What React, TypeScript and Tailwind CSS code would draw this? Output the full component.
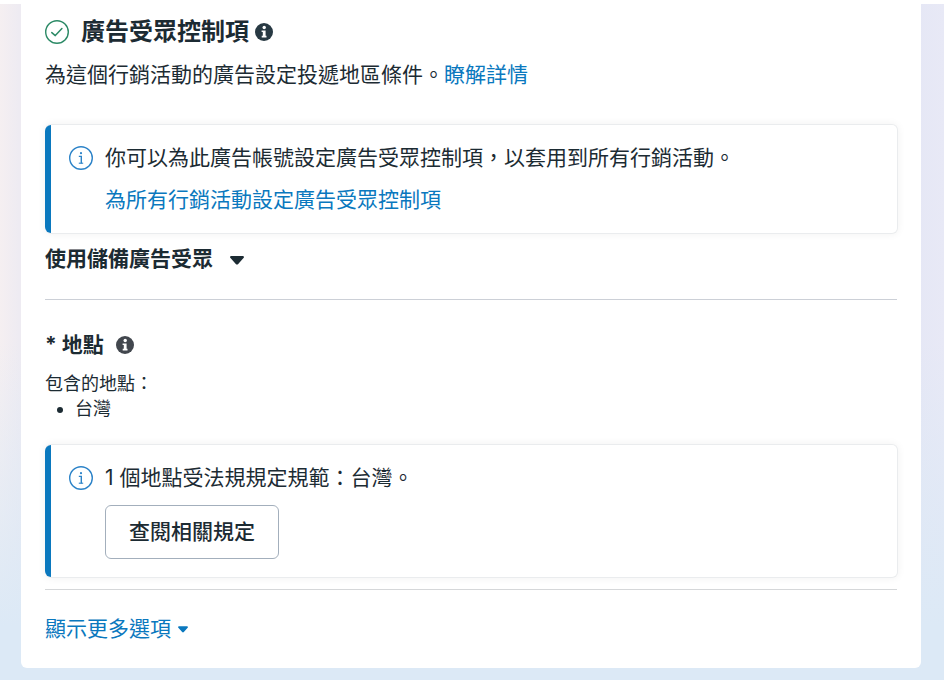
import React from 'react';
import clsx from 'clsx';

function SuccessIcon() {
  return (
    <svg viewBox="0 0 24 24" className="w-6 h-6 shrink-0" fill="none" stroke="#2c8a66" aria-hidden="true">
      <circle cx="12" cy="12" r="11.3" strokeWidth="1.4" />
      <path d="M6.8 12.6l3.5 3 6.6-7" strokeWidth="1.5" strokeLinecap="round" strokeLinejoin="round" />
    </svg>
  );
}

function InfoOutlineIcon() {
  return (
    <svg viewBox="0 0 24 24" className="w-6 h-6" fill="none" stroke="#2c83c8" aria-hidden="true">
      <circle cx="12" cy="12" r="11.3" strokeWidth="1.4" />
      <path d="M9.8 10.4h2.5v7" strokeWidth="1.4" />
      <path d="M9.8 17.2h4.4" strokeWidth="1.1" />
      <circle cx="12" cy="7.2" r="1.1" fill="#2c83c8" stroke="none" />
    </svg>
  );
}

function InfoSolidIcon({ className }: { className?: string }) {
  return (
    <svg viewBox="0 0 18 18" className={clsx('w-[18px] h-[18px]', className)} aria-hidden="true">
      <circle cx="9" cy="9" r="9" fill="currentColor" />
      <circle cx="9.2" cy="4.5" r="1.7" fill="#fff" />
      <path d="M6.6 7.4h4v5.4h.9v1.7H6.7v-1.7h1.1V9.1H6.6z" fill="#fff" />
    </svg>
  );
}

function CaretIcon({ className }: { className?: string }) {
  return (
    <svg viewBox="0 0 14 9" className={className} fill="currentColor" aria-hidden="true">
      <path d="M1.4 0h11.2c1.2 0 1.8 1.3.9 2.1L8.2 8c-.7.8-1.7.8-2.4 0L.5 2.1C-.4 1.3.2 0 1.4 0z" />
    </svg>
  );
}

function Notice({ text, children }: { text: string; children: React.ReactNode }) {
  return (
    <div className="flex -mr-px rounded-md border border-l-0 border-[#eaecee] bg-white shadow-[0_0_8px_rgba(0,0,0,0.06)]">
      <div className="w-1.5 shrink-0 rounded-l-md bg-[#0a78be]" />
      <div className="flex gap-3 px-[18px] py-4">
        <div className="flex h-[34px] shrink-0 items-center">
          <InfoOutlineIcon />
        </div>
        <div>
          <p>{text}</p>
          {children}
        </div>
      </div>
    </div>
  );
}

export default function App() {
  return (
    <div
      lang="zh-Hant"
      className="flex min-h-screen flex-col text-[21px] leading-[34px] text-[#1c2b33] font-[Inter,'Noto_Sans_CJK_TC',sans-serif]"
    >
      <div className="h-1 bg-white" />
      <div className="grow bg-[linear-gradient(to_bottom,transparent_50%,#dce9f6_92%),linear-gradient(to_right,#f5eff1,#eeebf2_2%,#e5e7f5_97%,#e8e9f6)] pb-3">
        <main className="ml-[21px] mr-[23px] rounded-b-md bg-white px-6 pt-[11px] pb-[22px]">
          <header className="flex items-center">
            <SuccessIcon />
            <h2 className="ml-3 text-2xl leading-[34px] font-bold">廣告受眾控制項</h2>
            <button type="button" aria-label="廣告受眾控制項" className="ml-1.5">
              <InfoSolidIcon className="text-[#283943]" />
            </button>
          </header>
          <p className="mt-[9px] mb-8">
            為這個行銷活動的廣告設定投遞地區條件。<a href="#learn" className="text-[#0a78be]">瞭解詳情</a>
          </p>

          <Notice text="你可以為此廣告帳號設定廣告受眾控制項，以套用到所有行銷活動。">
            <a href="#controls" className="mt-2 block text-[#0a78be]">為所有行銷活動設定廣告受眾控制項</a>
          </Notice>

          <button type="button" className="mt-2 flex items-center gap-[17px] font-bold">
            使用儲備廣告受眾
            <CaretIcon className="mt-0.5 w-3.5 h-[9px]" />
          </button>

          <hr className="mt-[23px] border-[#ccd0d7]" />

          <section className="mt-7">
            <div className="flex items-center gap-3">
              <h3 className="font-bold">* 地點</h3>
              <button type="button" aria-label="地點">
                <InfoSolidIcon className="text-[#42474e]" />
              </button>
            </div>
            <div className="mt-[9px] mb-[23px] text-lg leading-[25px]">
              <p>包含的地點：</p>
              <ul className="list-disc pl-[30px]">
                <li>台灣</li>
              </ul>
            </div>

            <Notice text="1 個地點受法規規定規範：台灣。">
              <button
                type="button"
                className="mt-2.5 mb-0.5 rounded-md border border-[#a3afbc] px-[23px] py-[9px] font-medium"
              >
                查閱相關規定
              </button>
            </Notice>
          </section>

          <hr className="mt-[11px] border-[#d5d7d9]" />

          <button type="button" className="mt-[22px] flex items-center gap-[7px] text-[#0a78be]">
            顯示更多選項
            <CaretIcon className="w-2.5 h-[7px]" />
          </button>
        </main>
      </div>
    </div>
  );
}
